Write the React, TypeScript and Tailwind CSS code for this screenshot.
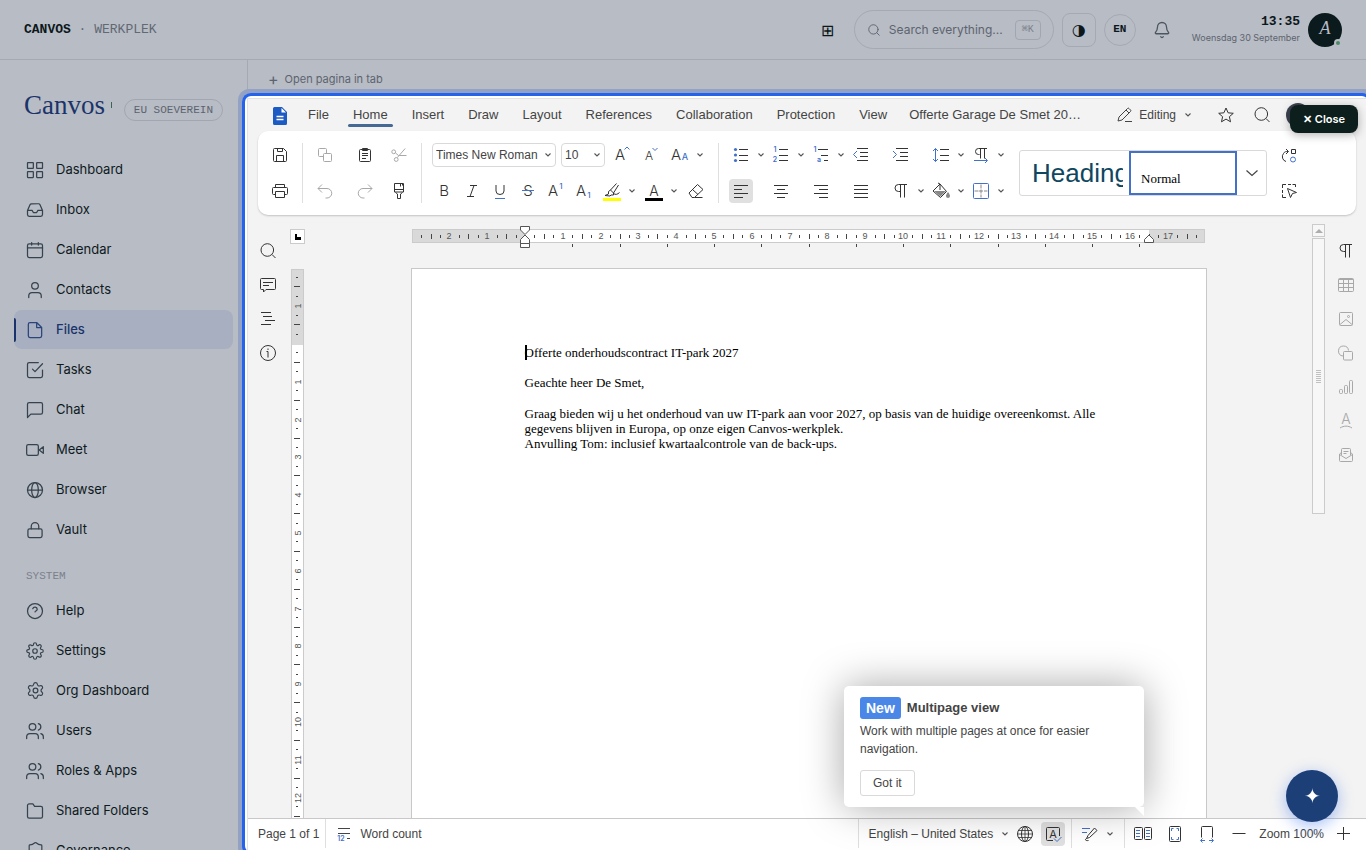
import type { ReactNode } from 'react';
import { Bell, Search, Settings, Shield, Users } from 'lucide-react';
import { FiSettings } from 'react-icons/fi';
import clsx from 'clsx';

const BLUE = '#4371c8';
const CM = 37.8;

interface ChildrenProps {
  children: ReactNode;
}

/* ---------- icons ---------- */

function NavIcon({ children }: ChildrenProps) {
  return (
    <svg width="20" height="20" viewBox="0 0 24 24" fill="none" stroke="currentColor" strokeWidth="1.5" strokeLinecap="round" strokeLinejoin="round" aria-hidden="true">
      {children}
    </svg>
  );
}

function Ic({ children }: ChildrenProps) {
  return (
    <svg width="20" height="20" viewBox="0 0 20 20" fill="none" stroke="currentColor" aria-hidden="true" className="shrink-0">
      {children}
    </svg>
  );
}

interface LetterProps {
  x:       number;
  y:       number;
  size:    number;
  fill?:   string;
  weight?: number;
  children: ReactNode;
}

function Letter({ x, y, size, fill = 'currentColor', weight = 300, children }: LetterProps) {
  return (
    <text x={x} y={y} fontSize={size} fill={fill} stroke="none" textAnchor="middle" fontWeight={weight} fontFamily="Inter, sans-serif">
      {children}
    </text>
  );
}

function Chevron() {
  return (
    <svg width="8" height="8" viewBox="0 0 8 8" fill="none" stroke="#555" strokeWidth="1.1" aria-hidden="true" className="shrink-0">
      <path d="M1.500 2.500 4 5l2.500-2.500" />
    </svg>
  );
}

const icons = {
  save: <Ic><path d="M3.500 4.500a1 1 0 0 1 1-1h9l3 3v9a1 1 0 0 1-1 1h-11a1 1 0 0 1-1-1zM7.500 3.500v3h5v-3M6.500 16.500v-6h7v6" /></Ic>,
  print: <Ic><path d="M5.500 6.500v-3h9v3M5.500 13.500h-2a1 1 0 0 1-1-1v-5a1 1 0 0 1 1-1h13a1 1 0 0 1 1 1v5a1 1 0 0 1-1 1h-2M5.500 10.500h9v6h-9z" /></Ic>,
  copy: <Ic><path d="M8.500 11.500h-4a1 1 0 0 1-1-1v-6a1 1 0 0 1 1-1h6a1 1 0 0 1 1 1v4" /><rect x="8.500" y="8.500" width="8" height="8" rx="1" /></Ic>,
  paste: <Ic><rect x="4.500" y="4.500" width="11" height="12" rx="1" /><path d="M7.500 3.500h5v2h-5zM7 8.500h6M7 10.500h6M7 13.500h4" /></Ic>,
  cut: <Ic><circle cx="4.700" cy="6.800" r="1.900" /><circle cx="7.200" cy="14.500" r="1.900" /><path d="m8.200 12.700 8-9.200M6.500 8l3 2.500h8" /></Ic>,
  undo: <Ic><path d="m7 3.500-4 4 4 4M3 7.500h9a4.500 4.500 0 0 1 0 9.500h-1.500" /></Ic>,
  redo: <Ic><path d="m13 3.500 4 4-4 4M17 7.500H8A4.500 4.500 0 0 0 8 17h1.500" /></Ic>,
  brush: <Ic><path d="M5.500 2.500h9v8.500h-9zM5.500 8.500h9M11.500 2.500v3M13.500 2.500v2M6.500 11.500l2 1.500v4.500h3V13l2-1.500" /></Ic>,
  grow: <Ic><Letter x={8} y={15} size={15}>A</Letter><path d="m12.500 4.500 2.500-2.500 2.500 2.500" stroke={BLUE} /></Ic>,
  shrink: <Ic><Letter x={8} y={15} size={12}>A</Letter><path d="m11.500 3 2.500 2.500 2.500-2.500" stroke={BLUE} /></Ic>,
  letterCase: <Ic><Letter x={6} y={15} size={15}>A</Letter><Letter x={15} y={15} size={9} fill={BLUE} weight={500}>A</Letter></Ic>,
  bold: <Ic><Letter x={10} y={15} size={15} weight={300}>B</Letter></Ic>,
  italic: <Ic><path d="M8 4.500h7M5 15.500h7M12 4.500l-4 11" /></Ic>,
  underline: <Ic><path d="M6 4v6a4 3.500 0 0 0 8 0V4" /><path d="M5 17.500h10" stroke={BLUE} /></Ic>,
  strike: <Ic><Letter x={10} y={15} size={15}>S</Letter><path d="M4 9.500h12" stroke={BLUE} /></Ic>,
  sup: <Ic><Letter x={7} y={15} size={15}>A</Letter><Letter x={15} y={8} size={8} fill={BLUE} weight={500}>1</Letter></Ic>,
  sub: <Ic><Letter x={7} y={15} size={15}>A</Letter><Letter x={15} y={17} size={8} fill={BLUE} weight={500}>1</Letter></Ic>,
  highlight: <Ic><path d="m14.500 2.500-6 6.500 3 3 5-8M8.500 9l-2 1.500v2.500L3 14.500l5 .5 1-1h2.500V12M11.500 12.500c2 1.500 4 1 6-1" /><path d="M1 18.500h18" stroke="#ff0" strokeWidth="3" /></Ic>,
  fontColor: <Ic><Letter x={10} y={15} size={14} weight={300}>A</Letter><path d="M1 18.500h18" stroke="#000" strokeWidth="3" /></Ic>,
  eraser: <Ic><path d="m3 12 8.500-8.500 5.500 5L8.500 16.500H6zM6.500 8.500l5.500 5M8.500 16.500h8" /></Ic>,
  bullets: <Ic><path d="M8 4.500h9M8 10.500h9M8 15.500h9" /><g fill={BLUE} stroke="none"><circle cx="4.500" cy="4.500" r="1.600" /><circle cx="4.500" cy="10" r="1.600" /><circle cx="4.500" cy="15.500" r="1.600" /></g></Ic>,
  numbers: <Ic><path d="M8 4.500h9M8 10.500h9M8 15.500h9" /><Letter x={4} y={7} size={7} fill={BLUE} weight={600}>1</Letter><Letter x={4} y={17} size={7} fill={BLUE} weight={600}>2</Letter></Ic>,
  multi: <Ic><path d="M7 4.500h10M10 10.500h7M13 15.500h4" /><Letter x={4} y={7} size={7} fill={BLUE} weight={600}>1</Letter><Letter x={8} y={17} size={7} fill={BLUE} weight={600}>a</Letter></Ic>,
  outdent: <Ic><path d="M6 3.500h11M9 7.500h8M9 11.500h8M6 15.500h11" /><path d="m6 6-3.500 3.500L6 13" stroke={BLUE} /></Ic>,
  indent: <Ic><path d="M5 3.500h12M9 7.500h8M9 11.500h8M5 15.500h12" /><path d="M2 6l3.500 3.500L2 13" stroke={BLUE} /></Ic>,
  spacing: <Ic><path d="M9 4.500h9M9 10.500h9M9 15.500h9" /><path d="M4.500 3.500v13M2 6l2.500-2.500L7 6M2 14l2.500 2.500L7 14" stroke={BLUE} /></Ic>,
  direction: <Ic><path d="M8.500 9.500h-1a3 3 0 0 1 0-6H16M9.500 3.500v10M13.500 3.500v10" /><path d="M3 15.500h13M14 13l2.500 2.500L14 18" stroke={BLUE} /></Ic>,
  alignLeft: <Ic><path d="M3 4.500h14M3 8.500h8M3 12.500h14M3 16.500h9" /></Ic>,
  alignCenter: <Ic><path d="M3 4.500h14M6 8.500h8M3 12.500h14M6 16.500h8" /></Ic>,
  alignRight: <Ic><path d="M3 4.500h14M8 8.500h9M3 12.500h14M8 16.500h9" /></Ic>,
  justify: <Ic><path d="M3 4.500h14M3 8.500h14M3 12.500h14M3 16.500h14" /></Ic>,
  pilcrow: <Ic><path d="M9.500 10.500h-2a3.500 3.500 0 0 1 0-7H16M9.500 3.500v13M13.500 3.500v13" /></Ic>,
  shading: <Ic><path d="m9 3 6.500 7.500-6 6L2 10zM7 2l2 1v6" /><path d="M3 10h12l-5.500 5.500zM17 11c1.500 2 2 3 2 4a2 2 0 0 1-4 0c0-1 .5-2 2-4z" fill="#888" stroke="none" /></Ic>,
  borders: <Ic><path d="M10 3.500v4M10 8.500v4M10 13.500v3M3.500 10h4M8 10h4M13 10h3.500" stroke="#888" /><rect x="2.500" y="2.500" width="15" height="15" rx="1" stroke={BLUE} /></Ic>,
  replace: <Ic><path d="M7 16.500a5 5 0 0 1-2.500-8C5.500 6.500 7 6.500 9 6.500M7 4l2.500 2.500L7 9M12.500 4.500h4v4h-4z" /><circle cx="14" cy="14.500" r="2.500" stroke={BLUE} /></Ic>,
  selectAll: <Ic><path d="M3.500 7V3.500H7M9 3.500h3M13.500 3.500h3V6M3.500 9v3M3.500 13.500v3H7" /><path d="m8.500 7.500 9 4-4 1-2 4z" /></Ic>,
  search: <Ic><circle cx="9.300" cy="9" r="6.300" /><path d="m14 13.500 3.500 3.500" /></Ic>,
  comments: <Ic><path d="M3.500 3.500h13a1 1 0 0 1 1 1v9a1 1 0 0 1-1 1H8l-2.500 2.500v-2.500h-2a1 1 0 0 1-1-1v-9a1 1 0 0 1 1-1zM5 7.500h10M5 10.500h6" /></Ic>,
  outline: <Ic><path d="M3 3.500h10M5 7.500h9M7 11.500h10M3 15.500h10" /></Ic>,
  info: <Ic><circle cx="10" cy="10" r="7.500" /><path d="M8.500 8.500h1.500v6M10 5.500v1.500" /></Ic>,
  table: <Ic><rect x="2.500" y="3.500" width="15" height="13" rx="1" /><path d="M3 4.500h14M3 8.500h14M3 12.500h14M7.500 4v12.500M12.500 4v12.500" /></Ic>,
  image: <Ic><rect x="3.500" y="3.500" width="13" height="13" rx="1" /><circle cx="12.500" cy="7.500" r="1" /><path d="m4 15.500 6-5 6 5" /></Ic>,
  shape: <Ic><path d="M7 13a5 5 0 1 1 5.500-5.500" /><rect x="7.500" y="8.500" width="9" height="8.500" rx="1" /></Ic>,
  chart: <Ic><rect x="3.500" y="12.500" width="3" height="4" rx="1" /><rect x="8.500" y="8.500" width="3" height="8" rx="1" /><rect x="13.500" y="3.500" width="3" height="13" rx="1" /></Ic>,
  textArt: <Ic><Letter x={10} y={13} size={14}>A</Letter><path d="M4 17c4-2.500 8-2.500 12 0" /></Ic>,
  mail: <Ic><path d="M5.500 10V4.500a1 1 0 0 1 1-1h7a1 1 0 0 1 1 1V10M7.500 6.500h5M7.500 8.500h3M5.500 7.500l-2 1.500v6.500a1 1 0 0 0 1 1h11a1 1 0 0 0 1-1V9l-2-1.500M3.500 9.500l6.500 4 6.500-4" /></Ic>,
  wordCount: <Ic><path d="M4 4.500h12M4 9.500h12M13 14.500h3" /><Letter x={7} y={17} size={7} fill={BLUE} weight={600}>12</Letter></Ic>,
  globe: <Ic><circle cx="10" cy="10" r="7.500" /><ellipse cx="10" cy="10" rx="3.500" ry="7.500" /><path d="M2.500 10h15M10 2.500v15M3.500 6.500h13M3.500 13.500h13" strokeWidth=".8" /></Ic>,
  spell: <Ic><path d="M10 16.500H4.500a1 1 0 0 1-1-1v-11a1 1 0 0 1 1-1h11a1 1 0 0 1 1 1V12" /><Letter x={10} y={14} size={11} weight={400}>A</Letter><path d="m11 14.500 3 3 4.500-4.500" stroke={BLUE} /></Ic>,
  track: <Ic><path d="M2 4.500h8M2 8.500h5" stroke={BLUE} /><path d="m8 11.500 6.500-7.500 2.500 2.500-7.500 7L6.500 14.500zM6.500 14.500c-2 1-1 2.500 2 2" /></Ic>,
  multipage: <Ic><rect x="1.500" y="3.500" width="8" height="12" rx="1" /><rect x="11.500" y="3.500" width="7" height="12" rx="1" /><path d="M3 6.500h4M3 9.500h4M3 12.500h4M13 6.500h4M13 9.500h4M13 12.500h4" stroke={BLUE} /></Ic>,
  fitPage: <Ic><rect x="4.500" y="2.500" width="11" height="15" rx="1" /><path d="M6.500 7V4.500H8.500M11.500 4.500h2V7M6.500 13v2.500h2M11.500 15.500h2V13" stroke={BLUE} /></Ic>,
  fitWidth: <Ic><path d="M4.500 13.500v-10a1 1 0 0 1 1-1h9a1 1 0 0 1 1 1v10" /><path d="M4 16.500h4M12 16.500h4M5.500 14.500l-2 2 2 2M14.500 14.500l2 2-2 2" stroke={BLUE} /></Ic>,
  minus: <Ic><path d="M3.500 9.500h13" /></Ic>,
  plus: <Ic><path d="M3 9.500h13M9.500 3v13" /></Ic>,
  pencil: <Ic><path d="m4 12 8.500-8.500a1 1 0 0 1 1.500 0l1.500 1.500a1 1 0 0 1 0 1.500L7 15l-4 1zM11 5l3 3M10 16.500h7" /></Ic>,
  star: <Ic><path d="m10 3 2.100 4.800 5.200.5-3.900 3.400 1.100 5.100-4.500-2.700-4.500 2.700 1.100-5.100-3.900-3.400 5.200-.5z" /></Ic>,
};

/* ---------- portal sidebar ---------- */

const mainNav = [
  { label: 'Dashboard', icon: <NavIcon><rect x="3" y="3" width="7" height="7" rx=".5" /><rect x="14" y="3" width="7" height="7" rx=".5" /><rect x="3" y="14" width="7" height="7" rx=".5" /><rect x="14" y="14" width="7" height="7" rx=".5" /></NavIcon> },
  { label: 'Inbox', icon: <NavIcon><path d="M21 12.500h-5.500L14 15h-4l-1.500-2.500H3M6 5.700l-3 6.800v5a2 2 0 0 0 2 2h14a2 2 0 0 0 2-2v-5l-3-6.800a2 2 0 0 0-1.800-1.200H7.800A2 2 0 0 0 6 5.700z" /></NavIcon> },
  { label: 'Calendar', icon: <NavIcon><rect x="3" y="4.500" width="18" height="16.500" rx="2" /><path d="M3 9.500h18M8 3v3M16 3v3" /></NavIcon> },
  { label: 'Contacts', icon: <NavIcon><circle cx="12" cy="7" r="4" /><path d="M19.500 21v-2a4 4 0 0 0-4-4h-7a4 4 0 0 0-4 4v2" /></NavIcon> },
  { label: 'Files', icon: <NavIcon><path d="M14 3H6a2 2 0 0 0-2 2v14a2 2 0 0 0 2 2h12a2 2 0 0 0 2-2V9zM14 3v6h6" /></NavIcon> },
  { label: 'Tasks', icon: <NavIcon><path d="m9 11 3 3 9-9.500M21 12v7a2 2 0 0 1-2 2H5a2 2 0 0 1-2-2V5a2 2 0 0 1 2-2h11" /></NavIcon> },
  { label: 'Chat', icon: <NavIcon><path d="M21 15a2 2 0 0 1-2 2H7l-4 4V5a2 2 0 0 1 2-2h14a2 2 0 0 1 2 2z" /></NavIcon> },
  { label: 'Meet', icon: <NavIcon><rect x="2" y="5.500" width="14" height="13" rx="2" /><path d="m22 8-5 4 5 4z" /></NavIcon> },
  { label: 'Browser', icon: <NavIcon><circle cx="12" cy="12" r="9" /><ellipse cx="12" cy="12" rx="4" ry="9" /><path d="M3 12h18" /></NavIcon> },
  { label: 'Vault', icon: <NavIcon><rect x="3.500" y="10.500" width="17" height="10.500" rx="2" /><path d="M7.500 10.500V7.500a4.500 4.500 0 0 1 9 0v3" /></NavIcon> },
];

const systemNav = [
  { label: 'Help', icon: <NavIcon><circle cx="12" cy="12" r="9" /><path d="M9.300 9.200a2.800 2.800 0 0 1 5.400.8c0 1.700-2.500 2-2.700 3" /></NavIcon> },
  { label: 'Settings', icon: <FiSettings size={18} strokeWidth={1.6} /> },
  { label: 'Org Dashboard', icon: <Settings size={19} strokeWidth={1.5} /> },
  { label: 'Users', icon: <Users size={20} strokeWidth={1.5} /> },
  { label: 'Roles & Apps', icon: <Users size={20} strokeWidth={1.5} /> },
  { label: 'Shared Folders', icon: <NavIcon><path d="M21 18.500a2 2 0 0 1-2 2H5a2 2 0 0 1-2-2v-13a2 2 0 0 1 2-2h4.500l2 3H19a2 2 0 0 1 2 2z" /></NavIcon> },
  { label: 'Governance', icon: <Shield size={19} strokeWidth={1.5} /> },
];

function NavLink({ label, icon, active }: { label: string; icon: ReactNode; active?: boolean }) {
  return (
    <li>
      <a
        href={`#${label.toLowerCase().replace(/\W+/g, '-')}`}
        aria-current={active ? 'page' : undefined}
        className={clsx('flex h-[39px] items-center rounded-lg text-[13px]', active ? 'bg-[#a8afc0] font-medium text-[#1a346b]' : 'text-[#0e1a22]')}
      >
        <span className={clsx('h-6 w-[2px] rounded-r', active && 'bg-[#1a346b]')} />
        <span className={clsx('ml-[9px] flex w-5 justify-center', active ? 'text-[#2b4579]' : 'text-[#36424e]')}>{icon}</span>
        <span className="ml-[11px]">{label}</span>
      </a>
    </li>
  );
}

function Sidebar() {
  return (
    <aside className="flex w-[248px] shrink-0 flex-col overflow-hidden border-r border-[#a5a9b3] px-[14px]">
      <div className="flex h-[90px] shrink-0 items-center pl-[10px]">
        <span className="font-['Liberation_Serif',serif] text-[27px] leading-8 text-[#1a346b]">Canvos</span>
        <span className="ml-[6px] h-[6px] w-px bg-[#3b6457]" />
        <span className="ml-auto mr-[10px] mt-[10px] whitespace-nowrap rounded-full border border-[#a2a6b0] px-[9px] font-['Liberation_Mono',monospace] text-[11px] leading-5 text-[#5c6470]">
          EU SOEVEREIN
        </span>
      </div>
      <nav aria-label="Main">
        <ul className="flex flex-col gap-px">
          {mainNav.map(item => (
            <NavLink key={item.label} {...item} active={item.label === 'Files'} />
          ))}
        </ul>
      </nav>
      <h2 className="mb-[7px] mt-[19px] pl-3 font-['Liberation_Mono',monospace] text-[11px] leading-4 text-[#7b818c]">SYSTEM</h2>
      <nav aria-label="System">
        <ul className="flex flex-col gap-px">
          {systemNav.map(item => (
            <NavLink key={item.label} {...item} />
          ))}
        </ul>
      </nav>
    </aside>
  );
}

function PortalHeader() {
  return (
    <header className="flex h-[60px] shrink-0 items-center gap-2 border-b border-[#a5a9b3] px-6">
      <p className="font-['Liberation_Mono',monospace] text-[13px] text-[#616974]">
        <strong className="text-[#0c171c]">CANVOS</strong> · WERKPLEK
      </p>
      <button type="button" aria-label="Apps" className="ml-auto w-9 text-center text-base text-[#0c171c]">⊞</button>
      <label className="flex h-[39px] w-[200px] items-center rounded-full border border-[#a5a9b3] px-3">
        <Search size={14} strokeWidth={1.6} className="shrink-0 text-[#5c6470]" />
        <input type="search" aria-label="Search everything" placeholder="Search everything..." className="ml-2 w-full min-w-0 bg-transparent text-xs placeholder:text-[#5c6470]" />
        <kbd className="rounded border border-[#a2a6b0] px-[6px] font-['Liberation_Mono',monospace] text-[10px] leading-[18px] text-[#7b818c]">⌘K</kbd>
      </label>
      <button type="button" aria-label="Theme" className="h-[34px] w-[34px] rounded-lg border border-[#a5a9b3] font-['DejaVu_Sans',sans-serif] text-base leading-8 text-[#0c171c]">◑</button>
      <button type="button" className="h-8 w-8 rounded-full border border-[#a5a9b3] font-['Liberation_Mono',monospace] text-[11px] font-bold text-[#0c171c]">EN</button>
      <button type="button" aria-label="Notifications" className="flex h-9 w-9 items-center justify-center text-[#4c5560]">
        <Bell size={18} strokeWidth={1.7} />
      </button>
      <div className="ml-1 text-right">
        <p className="font-['Liberation_Mono',monospace] text-[13px] font-bold leading-4 text-[#0c171c]">13:35</p>
        <p className="text-[9px] leading-4 text-[#5c6470]">Woensdag 30 September</p>
      </div>
      <button type="button" aria-label="Profile" className="relative h-[34px] w-[34px] rounded-full bg-[#0b1a1d] pb-1 font-['Liberation_Serif',serif] text-lg italic leading-6 text-[#b8bcc4]">
        A
        <span className="absolute bottom-0 right-0 h-2 w-2 rounded-full border-2 border-[#b8bcc4] bg-[#4f8a68]" />
      </button>
    </header>
  );
}

/* ---------- editor toolbar ---------- */

interface ToolProps {
  name:    keyof typeof icons;
  label:   string;
  menu?:   boolean;
  active?: boolean;
  muted?:  boolean;
}

function Tool({ name, label, menu, active, muted }: ToolProps) {
  return (
    <div className="flex shrink-0">
      <button
        type="button"
        aria-label={label}
        aria-pressed={active}
        className={clsx('flex h-6 w-6 items-center justify-center rounded', active && 'bg-[#e0e0e0]', muted ? 'text-[#a8a8a8]' : 'text-[#333]')}
      >
        {icons[name]}
      </button>
      {menu && (
        <button type="button" aria-label={`${label} options`} className="flex h-6 w-4 items-center justify-center">
          <Chevron />
        </button>
      )}
    </div>
  );
}

function Divider() {
  return <span className="w-px shrink-0 self-stretch bg-[#dfdfdf]" />;
}

function Combo({ id, label, value, className }: { id: string; label: string; value: string; className: string }) {
  return (
    <div className={clsx('relative flex items-center', className)}>
      <select id={id} aria-label={label} className="h-6 w-full appearance-none rounded border border-[#d9d9d9] bg-white pl-[3px] text-xs text-[#444]">
        <option>{value}</option>
      </select>
      <span className="pointer-events-none absolute right-1"><Chevron /></span>
    </div>
  );
}

const tabs = ['File', 'Home', 'Insert', 'Draw', 'Layout', 'References', 'Collaboration', 'Protection', 'View'];

function EditorHeader() {
  return (
    <div className="flex h-8 shrink-0 items-center pl-[25px] pr-[56px] text-[13px] text-[#444]">
      <svg width="14" height="18" viewBox="0 0 14 18" className="mr-4 mt-[2px] shrink-0" aria-hidden="true">
        <path d="M1.500 0H9l5 5v11.500a1.500 1.500 0 0 1-1.500 1.500h-11A1.500 1.500 0 0 1 0 16.500v-15A1.500 1.500 0 0 1 1.500 0z" fill="#1c5bc4" />
        <path d="M8.500 1v4.500H13z" fill="#fff" />
        <path d="M3.500 9.500h7M3.500 12.500h7" stroke="#fff" strokeWidth="1.500" />
      </svg>
      <div role="tablist" className="flex gap-[14px] self-start">
        {tabs.map(tab => (
          <button key={tab} type="button" role="tab" aria-selected={tab === 'Home'} className="flex h-7 flex-col justify-between pt-2 leading-4">
            <span className="px-[5px]">{tab}</span>
            <span className={clsx('h-[3px] w-full rounded-full', tab === 'Home' && 'bg-[#446995]')} />
          </button>
        ))}
      </div>
      <h1 className="ml-[17px] w-[173px] truncate">Offerte Garage De Smet 2027.docx</h1>
      <div className="ml-auto flex items-center gap-3">
        <button type="button" className="mr-[10px] flex items-center text-xs">
          <span className="mr-1">{icons.pencil}</span>
          Editing
          <span className="ml-2"><Chevron /></span>
        </button>
        <Tool name="star" label="Favorite" />
        <Tool name="search" label="Search" />
        <span className="h-6 w-6 rounded-full bg-[#3c4250]" />
      </div>
    </div>
  );
}

function Toolbar() {
  return (
    <div className="mx-[10px] flex shrink-0 items-center gap-[10px] rounded-[10px] bg-white px-[10px] py-3 shadow-[0_1px_2px_rgba(0,0,0,0.2)]">
      <div className="flex flex-col gap-3">
        <Tool name="save" label="Save" />
        <Tool name="print" label="Print" />
      </div>
      <Divider />
      <div className="flex gap-[10px]">
        <div className="grid grid-cols-2 gap-x-4 gap-y-3">
          <Tool name="copy" label="Copy" muted />
          <Tool name="paste" label="Paste" />
          <Tool name="undo" label="Undo" muted />
          <Tool name="redo" label="Redo" muted />
        </div>
        <div className="flex flex-col gap-3">
          <Tool name="cut" label="Cut" muted />
          <Tool name="brush" label="Copy style" />
        </div>
      </div>
      <Divider />
      <div className="flex flex-col gap-3">
        <div className="flex gap-[5px]">
          <Combo id="font" label="Font" value="Times New Roman" className="w-[124px]" />
          <Combo id="size" label="Font size" value="10" className="w-11" />
          <Tool name="grow" label="Increase size" />
          <Tool name="shrink" label="Decrease size" />
          <Tool name="letterCase" label="Change case" menu />
        </div>
        <div className="flex gap-1">
          <Tool name="bold" label="Bold" />
          <Tool name="italic" label="Italic" />
          <Tool name="underline" label="Underline" />
          <Tool name="strike" label="Strikethrough" />
          <Tool name="sup" label="Superscript" />
          <Tool name="sub" label="Subscript" />
          <div className="flex gap-[2px]">
            <Tool name="highlight" label="Highlight color" menu />
            <Tool name="fontColor" label="Font color" menu />
            <Tool name="eraser" label="Clear style" />
          </div>
        </div>
      </div>
      <Divider />
      <div className="flex flex-col gap-3">
        <div className="flex">
          <Tool name="bullets" label="Bullets" menu />
          <Tool name="numbers" label="Numbering" menu />
          <Tool name="multi" label="Multilevel list" menu />
          <div className="mr-4 flex gap-4">
            <Tool name="outdent" label="Decrease indent" />
            <Tool name="indent" label="Increase indent" />
          </div>
          <Tool name="spacing" label="Line spacing" menu />
          <Tool name="direction" label="Text direction" menu />
        </div>
        <div className="flex">
          <div className="mr-4 flex gap-4">
            <Tool name="alignLeft" label="Align left" active />
            <Tool name="alignCenter" label="Align center" />
            <Tool name="alignRight" label="Align right" />
            <Tool name="justify" label="Justified" />
          </div>
          <Tool name="pilcrow" label="Nonprinting characters" menu />
          <Tool name="shading" label="Shading" menu />
          <Tool name="borders" label="Borders" menu />
        </div>
      </div>
      <div className="flex h-[46px] w-[248px] shrink-0 rounded-[3px] border border-[#d9d9d9]">
        <button type="button" className="w-[109px] overflow-hidden pl-3 pr-[6px] text-left text-[26px] leading-[44px] text-[#0f4761]">
          <span className="block overflow-hidden whitespace-nowrap">Heading 1</span>
        </button>
        <button type="button" aria-pressed="true" className="w-[108px] border-2 border-[#4371c8] pl-[10px] pt-[12px] text-left font-['Liberation_Serif',serif] text-[13px] text-black">Normal</button>
        <button type="button" aria-label="More styles" className="flex flex-1 items-center justify-center">
          <svg width="14" height="8" viewBox="0 0 14 8" fill="none" stroke="#444" strokeWidth="1.200" aria-hidden="true"><path d="m1.500 1.500 5.500 5 5.500-5" /></svg>
        </button>
      </div>
      <div className="flex flex-col gap-3">
        <Tool name="replace" label="Replace" />
        <Tool name="selectAll" label="Select" />
      </div>
    </div>
  );
}

/* ---------- rulers ---------- */

// quarter-centimetre marks around the origin, labels on whole centimetres
function marks(from: number, to: number) {
  const list: { pos: number; cm: number }[] = [];
  for (let q = from; q <= to; q++) list.push({ pos: (q * CM) / 4, cm: q / 4 });
  return list.filter(m => m.cm !== 0);
}

function HorizontalRuler() {
  return (
    <svg width="796" height="28" viewBox="0 0 796 28" aria-hidden="true" className="mt-2 shrink-0">
      <rect x="1.500" y="6.500" width="792" height="13" fill="#fff" stroke="#cbcbcb" />
      <rect x="2" y="7" width="112" height="12" fill="#d9d9d9" />
      <rect x="738" y="7" width="55" height="12" fill="#d9d9d9" />
      {marks(-11, 71).map(({ pos, cm }) => {
        const x = Math.round(114 + pos);
        if (Number.isInteger(cm)) {
          return <text key={cm} x={x} y="16" textAnchor="middle" fontSize="9" fill="#555" fontFamily="Liberation Sans">{Math.abs(cm)}</text>;
        }
        const half = Number.isInteger(cm * 2);
        return <rect key={cm} x={x} y={half ? 11 : 12} width="1" height={half ? 5 : 3} fill="#444" />;
      })}
      {Array.from({ length: 13 }, (_, i) => (
        <rect key={i} x={Math.round(114 + (i + 1) * CM * 1.25)} y="21" width="1" height="3" fill="#444" />
      ))}
      <path d="M109.500 3.500h9v3.500l-4.500 4.500-4.500-4.500zM109.500 20.500v-4l4.500-4.500 4.500 4.500v4zM109.500 20.500h9v4h-9z" fill="#fff" stroke="#555" />
      <path d="M733.500 19.500v-3l4.500-4.500 4.500 4.500v3z" fill="#fff" stroke="#555" />
    </svg>
  );
}

function VerticalRuler() {
  return (
    <svg width="15" height="560" viewBox="0 0 15 560" aria-hidden="true" className="shrink-0">
      <rect x="1.500" y="1.500" width="12" height="560" fill="#fff" stroke="#cbcbcb" />
      <rect x="2" y="2" width="11" height="75" fill="#d9d9d9" />
      {marks(-7, 50).map(({ pos, cm }) => {
        const y = Math.round(76 + pos);
        if (Number.isInteger(cm)) {
          return <text key={cm} x="0" y="0" transform={`translate(11 ${y}) rotate(-90)`} textAnchor="middle" fontSize="9" fill="#555" fontFamily="Liberation Sans">{Math.abs(cm)}</text>;
        }
        const half = Number.isInteger(cm * 2);
        return <rect key={cm} x={half ? 4 : 6} y={y - 1} width={half ? 6 : 2} height="1" fill="#444" />;
      })}
    </svg>
  );
}

/* ---------- document ---------- */

function Workspace() {
  return (
    <div className="flex min-h-0 flex-1 overflow-hidden">
      <div className="flex w-10 shrink-0 flex-col items-center gap-[10px] pt-6">
        <Tool name="search" label="Find" />
        <Tool name="comments" label="Comments" />
        <Tool name="outline" label="Headings" />
        <Tool name="info" label="About" />
      </div>
      <div className="ml-[2px] flex w-[15px] shrink-0 flex-col gap-6 pt-[14px]">
        <button type="button" aria-label="Tab stop" className="flex h-[15px] w-[15px] shrink-0 items-center justify-center border border-[#cbcbcb] bg-white">
          <span className="h-[6px] w-[6px] border-b-[3px] border-l-2 border-black" />
        </button>
        <VerticalRuler />
      </div>
      <main className="flex min-w-0 flex-1 flex-col items-center">
        <HorizontalRuler />
        <article className="mt-[17px] min-h-[700px] w-[796px] shrink-0 border border-[#c8c8c8] bg-white pl-[113px] pr-[57px] pt-[76px] font-['Liberation_Serif',serif] text-[13px] leading-[15px] text-black">
          <p className="flex items-center"><span className="-mr-[2px] h-[15px] w-[2px] bg-black" />Offerte onderhoudscontract IT-park 2027</p>
          <p className="mt-[15px]">Geachte heer De Smet,</p>
          <p className="mt-4">
            Graag bieden wij u het onderhoud van uw IT-park aan voor 2027, op basis van de huidige overeenkomst. Alle<br />
            gegevens blijven in Europa, op onze eigen Canvos-werkplek.
          </p>
          <p>Anvulling Tom: inclusief kwartaalcontrole van de back-ups.</p>
        </article>
      </main>
      <div className="flex w-[14px] shrink-0 flex-col gap-px pr-px pt-[9px]">
        <button type="button" aria-label="Scroll up" className="flex h-[13px] items-center justify-center border border-[#cbcbcb] bg-[#f7f7f7]">
          <svg width="8" height="4" viewBox="0 0 8 4" aria-hidden="true"><path d="M4 0l4 4H0z" fill="#adadad" /></svg>
        </button>
        <div className="flex h-[276px] flex-col items-center justify-center gap-px border border-[#cbcbcb] bg-[#f7f7f7]">
          {[0, 1, 2, 3, 4, 5, 6].map(i => <span key={i} className="h-px w-[5px] bg-[#c0c0c0]" />)}
        </div>
      </div>
      <div className="flex w-10 shrink-0 flex-col items-center gap-[10px] pt-6">
        <Tool name="pilcrow" label="Paragraph settings" />
        <Tool name="table" label="Table settings" muted />
        <Tool name="image" label="Image settings" muted />
        <Tool name="shape" label="Shape settings" muted />
        <Tool name="chart" label="Chart settings" muted />
        <Tool name="textArt" label="Text Art settings" muted />
        <Tool name="mail" label="Mail merge settings" muted />
      </div>
    </div>
  );
}

function StatusBar() {
  return (
    <footer className="flex h-8 shrink-0 items-center border-t border-[#c8c8c8] bg-white pb-[2px] pl-[10px] pr-[10px] text-xs text-[#444]">
      <span className="mr-[6px] whitespace-nowrap">Page 1 of 1</span>
      <Divider />
      <button type="button" className="ml-2 flex items-center gap-[6px]">
        {icons.wordCount}
        Word count
      </button>
      <div className="ml-auto flex items-center self-stretch">
        <Divider />
        <button type="button" className="ml-[10px] mr-1 flex items-center gap-2 whitespace-nowrap">
          English – United States
          <Chevron />
        </button>
        <div className="mr-[6px] flex gap-1">
          <Tool name="globe" label="Document language" />
          <Tool name="spell" label="Spell checking" active />
        </div>
        <Divider />
        <div className="mx-[6px] flex items-center">
          <Tool name="track" label="Track changes" menu />
        </div>
        <Divider />
        <div className="ml-[6px] flex items-center gap-2">
          <Tool name="multipage" label="Multipage view" />
          <Tool name="fitPage" label="Fit to page" />
          <Tool name="fitWidth" label="Fit to width" />
          <Tool name="minus" label="Zoom out" />
          <span className="whitespace-nowrap">Zoom 100%</span>
          <Tool name="plus" label="Zoom in" />
        </div>
      </div>
    </footer>
  );
}

function MultipageTip() {
  return (
    <div role="dialog" aria-label="Multipage view" className="absolute bottom-[43px] right-[222px] w-[300px] rounded-[5px] bg-white px-4 pb-[11px] pt-[11px] text-[#444] shadow-[0_0_40px_rgba(0,0,0,0.35)]">
      <div className="flex items-center gap-[6px]">
        <span className="rounded-[3px] bg-[#4a87e7] px-[6px] text-sm font-bold leading-[22px] text-white">New</span>
        <h2 className="text-[13px] font-bold">Multipage view</h2>
      </div>
      <p className="mt-[3px] text-xs leading-[18px]">Work with multiple pages at once for easier navigation.</p>
      <button type="button" className="mt-3 h-[26px] rounded-[3px] border border-[#d9d9d9] px-3 text-xs">Got it</button>
      <span className="absolute right-0 top-full h-[9px] w-[9px] bg-white [clip-path:polygon(0_0,100%_0,100%_100%)]" />
    </div>
  );
}

export default function App() {
  return (
    <div className="flex h-screen flex-col overflow-hidden bg-[#b8bcc4] font-[Inter,sans-serif]">
      <PortalHeader />
      <div className="flex min-h-0 flex-1">
        <Sidebar />
        <div className="-ml-px flex min-w-0 flex-1 flex-col">
          <div className="flex h-[38px] shrink-0 items-center gap-[6px] pl-[21px] text-[11px] text-[#5c6470]">
            <span className="text-base leading-4">+</span>
            <button type="button">Open pagina in tab</button>
          </div>
          <section
            aria-label="Document editor"
            className="relative flex min-h-0 flex-1 flex-col rounded bg-[#f3f3f3] font-['Liberation_Sans',sans-serif] shadow-[0_0_0_2px_#ffffff,0_0_0_5px_#2563eb,0_0_0_9px_#92a1c4]"
          >
            <div className="flex min-h-0 flex-1 flex-col border-l border-t border-[#e2e2e2]">
              <EditorHeader />
              <Toolbar />
              <Workspace />
              <StatusBar />
            </div>
            <MultipageTip />
            <button type="button" className="absolute right-2 top-[7px] h-7 w-[68px] rounded-lg bg-[#0d1f1c] font-[Inter,sans-serif] text-[11px] font-semibold text-white shadow-[0_2px_10px_rgba(0,0,0,0.3)]">✕ Close</button>
          </section>
        </div>
      </div>
      <button type="button" aria-label="Assistant" className="fixed bottom-7 right-7 h-[52px] w-[52px] rounded-full bg-[#1c3f78] text-xl text-white shadow-[0_4px_16px_rgba(37,99,235,0.4)]">✦</button>
    </div>
  );
}
